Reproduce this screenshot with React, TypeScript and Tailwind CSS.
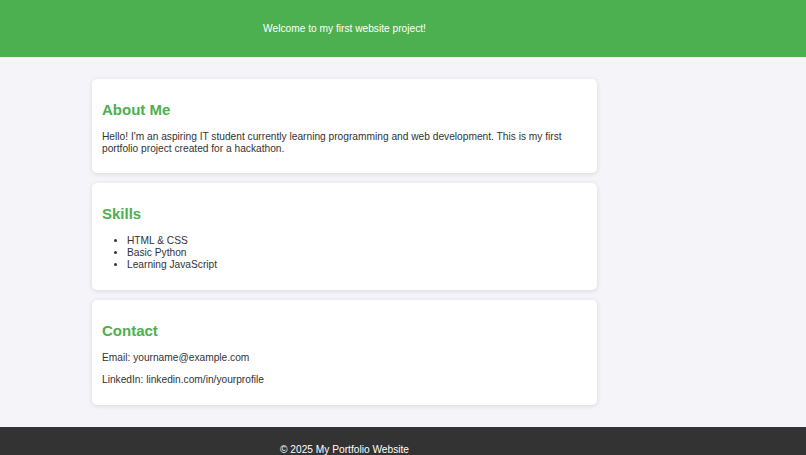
export default function App() {
  const card = 'bg-white rounded-[5px] shadow-[0_1px_5px_rgba(0,0,0,0.12)] px-[10px] pt-[10px] pb-[8px]'
  const heading = 'text-[15px] font-bold text-[#4CAF50] leading-[17px] mt-[12px] mb-[13px]'

  return (
    <div className="min-h-screen bg-[#f4f4f9] font-['Liberation_Sans',Arial,sans-serif] text-[10.2px] leading-[12px] text-[#333]">
      {/* Header */}
      <header className="bg-[#4CAF50] text-white h-[57px] flex">
        <div className="w-[689px] flex items-center justify-center">
          <p>Welcome to my first website project!</p>
        </div>
      </header>

      <main className="w-[689px] pt-[22px] pb-[22px]">
        <div className="w-[505px] mx-auto flex flex-col gap-[10px]">
          {/* About */}
          <section className={card}>
            <h2 className={heading}>About Me</h2>
            <p className="mb-[10px]">
              Hello! I'm an aspiring IT student currently learning programming and web development. This is my first portfolio project created for a hackathon.
            </p>
          </section>

          {/* Skills */}
          <section className={card}>
            <h2 className={heading}>Skills</h2>
            <ul className="list-disc pl-[25px] mb-[11px]">
              <li>HTML &amp; CSS</li>
              <li>Basic Python</li>
              <li>Learning JavaScript</li>
            </ul>
          </section>

          {/* Contact */}
          <section className={card}>
            <h2 className={heading}>Contact</h2>
            <p className="mb-[10px]">Email: yourname@example.com</p>
            <p className="mb-[11px]">LinkedIn: linkedin.com/in/yourprofile</p>
          </section>
        </div>
      </main>

      {/* Footer */}
      <footer className="bg-[#333] text-white">
        <div className="w-[689px] text-center pt-[17px] pb-[16px]">
          <p>© 2025 My Portfolio Website</p>
        </div>
      </footer>
    </div>
  )
}
